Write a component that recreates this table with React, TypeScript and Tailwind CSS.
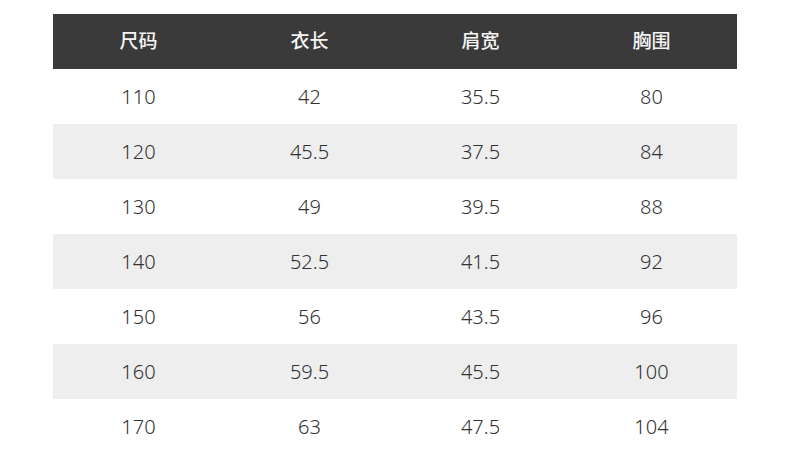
import React from "react";

const rows = [
  ["110", "42", "35.5", "80"],
  ["120", "45.5", "37.5", "84"],
  ["130", "49", "39.5", "88"],
  ["140", "52.5", "41.5", "92"],
  ["150", "56", "43.5", "96"],
  ["160", "59.5", "45.5", "100"],
  ["170", "63", "47.5", "104"],
];

export default function App() {
  return (
    <div
      className="w-[790px] h-[466px] bg-white pt-[14px] pl-[53px]"
      style={{ fontFamily: '"Noto Sans", "Noto Sans CJK SC", sans-serif' }}
    >
      <div className="w-[684px]">
        <div className="grid grid-cols-4 h-[55px] bg-[#3a3a3a] text-[#f5f5f5] text-[19px] font-medium items-center text-center">
          <div>尺码</div>
          <div>衣长</div>
          <div>肩宽</div>
          <div>胸围</div>
        </div>
        {rows.map((r, i) => (
          <div
            key={i}
            className={
              "grid grid-cols-4 h-[55px] items-center text-center text-[20px] font-light text-[#333333] " +
              (i % 2 === 1 ? "bg-[#eeeeee]" : "bg-white")
            }
          >
            {r.map((c, j) => (
              <div key={j}>{c}</div>
            ))}
          </div>
        ))}
      </div>
    </div>
  );
}
